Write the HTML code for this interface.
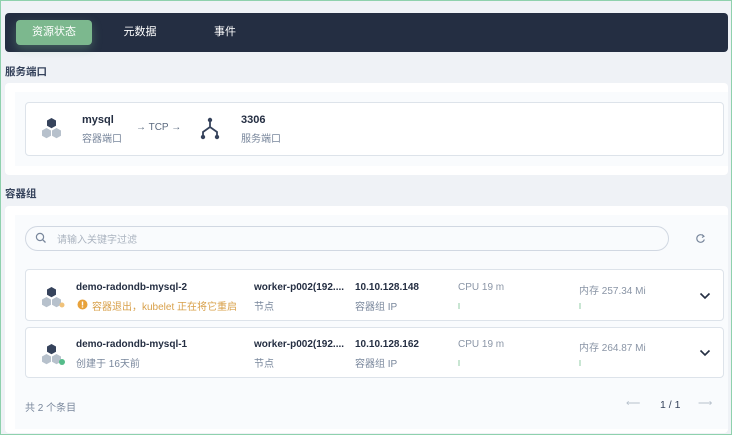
<!DOCTYPE html>
<html><head><meta charset="utf-8"><style>
*{box-sizing:border-box;margin:0;padding:0}
body{width:732px;height:435px;overflow:hidden;background:#eff2f6;font-family:"Liberation Sans","Noto Sans CJK SC",sans-serif;font-size:12px;color:#242e42;position:relative;border:1px solid #8fd1ad}
.abs{position:absolute}
.nav{left:4px;top:12px;width:723px;height:39px;background:#242e42;border-radius:4px}
.tab{position:absolute;top:7px;height:25px;line-height:25px;color:#fff;font-size:11px;text-align:center}
.tab.on{left:11px;width:76px;background:#7cb88e;border-radius:4px;box-shadow:0 4px 10px rgba(124,184,142,.35)}
.h{font-size:10.5px;color:#36435c;font-weight:bold}
.panel{background:#fff;border-radius:4px}
.inner{background:#f9fbfd}
.card{background:#fff;border:1px solid #dde3ea;border-radius:4px}
.b{font-weight:bold;font-size:10px;color:#242e42}
.g{font-size:10px;color:#79879c}
.bar{width:2px;height:6px;background:#c9e6d3}
</style></head><body>
<div class="abs nav">
 <div class="tab on">资源状态</div>
 <div class="tab" style="left:110px;width:50px">元数据</div>
 <div class="tab" style="left:200px;width:40px">事件</div>
</div>
<div class="abs h" style="left:4px;top:63px">服务端口</div>
<div class="abs panel" style="left:4px;top:82px;width:723px;height:92px"></div>
<div class="abs inner" style="left:14px;top:91px;width:713px;height:74px"></div>
<div class="abs card" style="left:24px;top:101px;width:699px;height:54px"></div>
<svg class="abs" style="left:38px;top:116px" width="26" height="24" viewBox="0 0 26 24"><polygon points="12.5,1 17,3.5 17,8.7 12.5,11.2 8,8.7 8,3.5" fill="#36435c"/><polygon points="7.5,11 12,13.5 12,18.7 7.5,21.2 3,18.7 3,13.5" fill="#b7c1cc"/><polygon points="17.5,11 22,13.5 22,18.7 17.5,21.2 13,18.7 13,13.5" fill="#b7c1cc"/></svg>
<div class="abs b" style="left:81px;top:113px;font-size:11px">mysql</div>
<div class="abs g" style="left:81px;top:129px">容器端口</div>
<div class="abs g" style="left:135px;top:121px;color:#5c6b80">→ TCP →</div>
<svg class="abs" style="left:197px;top:116px" width="24" height="24" viewBox="0 0 24 24"><g stroke="#36435c" stroke-width="1.8" fill="none"><path d="M12 3V10L5 15V20M12 10L19 15V20"/></g><circle cx="12" cy="3" r="2.2" fill="#36435c"/><circle cx="5" cy="20" r="2.2" fill="#36435c"/><circle cx="19" cy="20" r="2.2" fill="#36435c"/></svg>
<div class="abs b" style="left:240px;top:113px;font-size:11px">3306</div>
<div class="abs g" style="left:240px;top:129px">服务端口</div>

<div class="abs h" style="left:4px;top:185px">容器组</div>
<div class="abs panel" style="left:4px;top:205px;width:723px;height:227px"></div>
<div class="abs inner" style="left:14px;top:214px;width:713px;height:214px"></div>
<div class="abs" style="left:24px;top:225px;width:644px;height:25px;border:1px solid #d1d8e2;border-radius:13px;background:#f9fbfd"></div>
<svg class="abs" style="left:34px;top:231px" width="12" height="12" viewBox="0 0 12 12"><circle cx="5" cy="5" r="3.6" stroke="#79879c" stroke-width="1.2" fill="none"/><path d="M7.7 7.7L10.5 10.5" stroke="#79879c" stroke-width="1.3"/></svg>
<div class="abs" style="left:56px;top:230px;font-size:10px;color:#abb4c0">请输入关键字过滤</div>
<svg class="abs" style="left:694px;top:232px" width="11" height="11" viewBox="0 0 11 11"><path d="M8.5 3A3.8 3.8 0 1 0 9.3 6.5" stroke="#79879c" stroke-width="1.2" fill="none"/><path d="M7 1.5L9 3.3 7 4.5" stroke="#79879c" stroke-width="1.1" fill="none"/></svg>

<div class="abs card" style="left:24px;top:268px;width:699px;height:52px"></div>
<div class="abs card" style="left:24px;top:326px;width:699px;height:51px"></div>

<svg class="abs" style="left:38px;top:285px" width="28" height="25" viewBox="0 0 28 25"><polygon points="12.5,1 17,3.5 17,8.7 12.5,11.2 8,8.7 8,3.5" fill="#36435c"/><polygon points="7.5,11 12,13.5 12,18.7 7.5,21.2 3,18.7 3,13.5" fill="#b7c1cc"/><polygon points="17.5,11 22,13.5 22,18.7 17.5,21.2 13,18.7 13,13.5" fill="#b7c1cc"/><circle cx="23" cy="19" r="2.5" fill="#f0c27a"/></svg>
<div class="abs b" style="left:75px;top:281px">demo-radondb-mysql-2</div>
<svg class="abs" style="left:76px;top:298px" width="11" height="11" viewBox="0 0 11 11"><circle cx="5.5" cy="5.5" r="5" fill="#e8a23b"/><rect x="4.8" y="2.5" width="1.4" height="4" fill="#fff"/><rect x="4.8" y="7.3" width="1.4" height="1.3" fill="#fff"/></svg>
<div class="abs g" style="left:91px;top:297px;color:#d8a04a">容器退出，kubelet 正在将它重启</div>
<div class="abs b" style="left:253px;top:281px">worker-p002(192....</div>
<div class="abs g" style="left:253px;top:297px">节点</div>
<div class="abs b" style="left:354px;top:281px">10.10.128.148</div>
<div class="abs g" style="left:354px;top:297px">容器组 IP</div>
<div class="abs g" style="left:457px;top:281px;color:#8a95a6">CPU 19 m</div>
<div class="abs bar" style="left:457px;top:302px"></div>
<div class="abs g" style="left:578px;top:281px;color:#8a95a6">内存 257.34 Mi</div>
<div class="abs bar" style="left:578px;top:302px"></div>
<svg class="abs" style="left:698px;top:291px" width="12" height="8" viewBox="0 0 12 8"><path d="M1.5 1.5L6 6 10.5 1.5" stroke="#242e42" stroke-width="1.6" fill="none"/></svg>

<svg class="abs" style="left:38px;top:342px" width="28" height="25" viewBox="0 0 28 25"><polygon points="12.5,1 17,3.5 17,8.7 12.5,11.2 8,8.7 8,3.5" fill="#36435c"/><polygon points="7.5,11 12,13.5 12,18.7 7.5,21.2 3,18.7 3,13.5" fill="#b7c1cc"/><polygon points="17.5,11 22,13.5 22,18.7 17.5,21.2 13,18.7 13,13.5" fill="#b7c1cc"/><circle cx="23" cy="19" r="3" fill="#55bc8a"/></svg>
<div class="abs b" style="left:75px;top:338px">demo-radondb-mysql-1</div>
<div class="abs g" style="left:75px;top:354px">创建于 16天前</div>
<div class="abs b" style="left:253px;top:338px">worker-p002(192....</div>
<div class="abs g" style="left:253px;top:354px">节点</div>
<div class="abs b" style="left:354px;top:338px">10.10.128.162</div>
<div class="abs g" style="left:354px;top:354px">容器组 IP</div>
<div class="abs g" style="left:457px;top:338px;color:#8a95a6">CPU 19 m</div>
<div class="abs bar" style="left:457px;top:359px"></div>
<div class="abs g" style="left:578px;top:338px;color:#8a95a6">内存 264.87 Mi</div>
<div class="abs bar" style="left:578px;top:359px"></div>
<svg class="abs" style="left:698px;top:348px" width="12" height="8" viewBox="0 0 12 8"><path d="M1.5 1.5L6 6 10.5 1.5" stroke="#242e42" stroke-width="1.6" fill="none"/></svg>

<div class="abs g" style="left:24px;top:398px">共 2 个条目</div>
<div class="abs g" style="left:625px;top:397px;color:#b7c1cc">⟵</div>
<div class="abs" style="left:659px;top:398px;font-size:10.5px;color:#36435c">1 / 1</div>
<div class="abs g" style="left:697px;top:397px;color:#b7c1cc">⟶</div>
</body></html>
